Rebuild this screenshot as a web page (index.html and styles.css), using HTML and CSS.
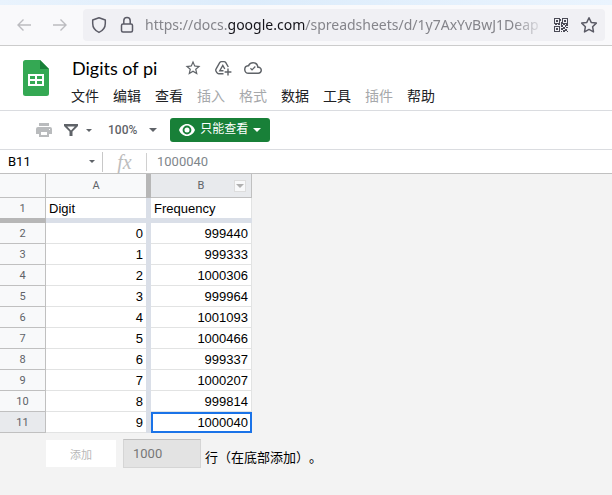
FILE: index.html
```html
<!DOCTYPE html>
<html lang="zh-CN">
<head>
<meta charset="utf-8">
<title>Digits of pi</title>
<link rel="stylesheet" href="styles.css">
</head>
<body>
<div class="tabstrip"></div>
<div class="browserbar">
  <button class="nav" aria-label="后退"><svg width="16" height="16" viewBox="0 0 16 16"><path d="M15 8H2M7.500 2.500L2 8l5.500 5.500"/></svg></button>
  <button class="nav" aria-label="前进"><svg width="16" height="16" viewBox="0 0 16 16"><path d="M1 8h13M8.500 2.500L14 8l-5.500 5.500"/></svg></button>
  <div class="address">
    <svg class="line" width="16" height="18" viewBox="0 0 16 18"><path d="M8 1.700L14.300 4v3.500c0 4.500-2.800 7.300-6.300 8.900-3.500-1.600-6.300-4.400-6.300-8.900V4z"/></svg>
    <svg class="line" width="16" height="18" viewBox="0 0 16 18"><rect x="2.500" y="8" width="11" height="8" rx="1.500"/><path d="M4.800 8V4.800a3.200 3.200 0 0 1 6.400 0V8"/></svg>
    <div class="url">https://docs.<b>google.com</b>/spreadsheets/d/1y7AxYvBwJ1Deap</div>
    <svg class="qr" width="14" height="14" viewBox="0 0 14 14"><path fill-rule="evenodd" d="M0 0h6v6H0zM1 1v4h4V1zM8 0h6v6H8zM9 1v4h4V1zM0 8h6v6H0zM1 9v4h4V9zM2 2h2v2H2zM10 2h2v2h-2zM2 10h2v2H2zM6 1h1v2H6zM7 4h1v3H7zM1 6h2v1H1zM4 6h2v1H4zM9 6h2v1H9zM12 6h2v2h-2zM7 7h2v2H7zM9 9h2v2H9zM11 7h1v2h-1zM12 9h2v1h-2zM7 10h2v2H7zM11 11h2v2h-2zM9 12h2v2H9zM7 13h1v1H7zM13 13h1v1h-1z"/></svg>
    <svg class="line" width="18" height="18" viewBox="0 0 18 18"><path d="M9 1.700l2.200 4.700 5.100.7-3.700 3.600.9 5.200L9 13.400l-4.500 2.500.9-5.200L1.700 7.100l5.100-.7z"/></svg>
  </div>
</div>
<header class="docheader">
  <svg class="logo" width="26" height="36" viewBox="0 0 26 36"><path fill="#34a853" d="M2.500 0H17l9 9v24.500a2.500 2.500 0 0 1-2.500 2.500h-21A2.500 2.500 0 0 1 0 33.500v-31A2.500 2.500 0 0 1 2.500 0z"/><path fill="#188038" d="M17 0l9 9h-9z"/><path fill="#fff" fill-rule="evenodd" d="M5 14h16v12H5zM7 16v3h5v-3zM14 16v3h5v-3zM7 21v3h5v-3zM14 21v3h5v-3z"/></svg>
  <div class="doc">
    <div class="titlerow">
      <h1>Digits of pi</h1>
      <div class="titleicons">
        <svg width="18" height="18" viewBox="0 0 24 24"><path d="M22 9.240l-7.190-.62L12 2 9.190 8.630 2 9.240l5.460 4.730L5.820 21 12 17.270 18.180 21l-1.630-7.030zM12 15.400l-3.760 2.270 1-4.280-3.320-2.880 4.380-.38L12 6.100l1.710 4.040 4.380.38-3.320 2.880 1 4.280z"/></svg>
        <svg width="18" height="18" viewBox="0 0 18 18"><path class="stroke" d="M9.500 14.700H4.700Q3.500 14.700 2.900 13.700L2 12.200Q1.400 11.200 2 10.200L5.700 3.600Q6.300 2.600 7.500 2.600H10Q11.200 2.600 11.800 3.600L14.300 8M9.500 11.700H5.800L8.800 6.500l2 3.500M14 9.600v6.800M10.600 13H17.400"/></svg>
        <svg width="18" height="18" viewBox="0 0 24 24"><path d="M19.350 10.040A7.490 7.490 0 0 0 12 4C9.110 4 6.600 5.640 5.350 8.040A5.994 5.994 0 0 0 0 14c0 3.310 2.690 6 6 6h13c2.760 0 5-2.240 5-5 0-2.640-2.050-4.780-4.650-4.960zM19 18H6a4 4 0 0 1-.4-7.980l1.070-.11.500-.95A5.470 5.470 0 0 1 12 6c2.620 0 4.880 1.860 5.390 4.430l.3 1.500 1.530.11A2.980 2.980 0 0 1 19 18z"/><path d="M10.700 13.200l-1.500-1.500L8 12.900l2.700 2.700 5-5-1.200-1.200z"/></svg>
      </div>
    </div>
    <nav class="menu">
      <button>文件</button><button>编辑</button><button>查看</button><button disabled>插入</button><button disabled>格式</button><button>数据</button><button>工具</button><button disabled>插件</button><button>帮助</button>
    </nav>
  </div>
</header>
<div class="toolbar">
  <button class="print" disabled aria-label="打印"><svg width="16" height="14" viewBox="0 0 16 14"><path fill-rule="evenodd" d="M3 0h10v3H3zM2 4h12a2 2 0 0 1 2 2v5h-3v3H3v-3H0V6a2 2 0 0 1 2-2zM5 9v3h6V9zM13 6v1h1V6z"/></svg></button>
  <button class="filter" aria-label="过滤器"><svg width="14" height="12" viewBox="0 0 14 12"><path fill-rule="evenodd" d="M0 0h14v2L8.500 7.500V12h-3V7.500L0 2zM3.200 2.600L7 6.400l3.800-3.800z"/></svg><i class="caret small"></i></button>
  <button class="zoom">100%<i class="caret"></i></button>
  <button class="viewonly"><svg width="16" height="12" viewBox="0 0 16 12"><path fill-rule="evenodd" d="M8 0c3.600 0 6.700 2.500 8 6-1.300 3.500-4.400 6-8 6S1.300 9.500 0 6c1.300-3.500 4.400-6 8-6zM8 1.600a4.400 4.400 0 1 0 0 8.800 4.400 4.400 0 0 0 0-8.800zM8 3.500a2.500 2.500 0 1 1 0 5 2.500 2.500 0 0 1 0-5z"/></svg><span>只能查看</span><i class="caret"></i></button>
</div>
<div class="formulabar">
  <button class="namebox">B11<i class="caret small"></i></button>
  <span class="fx">fx</span>
  <input class="formula" aria-label="公式" value="1000040" readonly>
</div>
<main class="sheet">
  <table>
    <colgroup><col class="c-head"><col class="c-data"><col class="c-freeze"><col class="c-last"></colgroup>
    <thead>
      <tr><th></th><th>A</th><td class="bar"></td><th class="active last"><div class="colname">B<button class="colmenu" aria-label="列菜单"><i class="caret"></i></button></div></th></tr>
    </thead>
    <tbody>
      <tr class="titles"><th>1</th><td>Digit</td><td class="gap"></td><td>Frequency</td></tr>
      <tr class="freeze"><td class="bar"></td><td class="gap" colspan="3"></td></tr>
      <tr><th>2</th><td>0</td><td class="gap"></td><td>999440</td></tr>
      <tr><th>3</th><td>1</td><td class="gap"></td><td>999333</td></tr>
      <tr><th>4</th><td>2</td><td class="gap"></td><td>1000306</td></tr>
      <tr><th>5</th><td>3</td><td class="gap"></td><td>999964</td></tr>
      <tr><th>6</th><td>4</td><td class="gap"></td><td>1001093</td></tr>
      <tr><th>7</th><td>5</td><td class="gap"></td><td>1000466</td></tr>
      <tr><th>8</th><td>6</td><td class="gap"></td><td>999337</td></tr>
      <tr><th>9</th><td>7</td><td class="gap"></td><td>1000207</td></tr>
      <tr><th>10</th><td>8</td><td class="gap"></td><td>999814</td></tr>
      <tr><th class="active">11</th><td>9</td><td class="gap"></td><td class="selected">1000040</td></tr>
    </tbody>
  </table>
  <div class="addrows">
    <button disabled>添加</button>
    <input id="rows" value="1000" disabled>
    <label for="rows">行（在底部添加）。</label>
  </div>
</main>
</body>
</html>
```
FILE: styles.css
```css
* { box-sizing: border-box; }
body {
  margin: 0;
  min-height: 100vh;
  display: flex;
  flex-direction: column;
  background: #fff;
  color: #000;
  font-family: Roboto, "Noto Sans CJK SC", sans-serif;
}
button, input {
  font: inherit;
  color: inherit;
  border: 0;
  padding: 0;
  background: none;
}
svg { display: block; flex: none; }

.tabstrip { height: 5px; background: linear-gradient(90deg, #e9f3fd, #dcecfb 40%, #eaf4fe); }
.browserbar {
  display: flex;
  align-items: center;
  height: 41px;
  padding: 0 7px 1px 16px;
  background: #f9f9fb;
  border-bottom: 1px solid #ccc;
}
.nav { margin-right: 20px; }
.nav + .nav { margin-right: 15px; }
.nav path { fill: none; stroke: #bcbcc0; stroke-width: 1.4; }
.address {
  flex: 1;
  min-width: 0;
  height: 32px;
  display: flex;
  align-items: center;
  padding: 0 7px 0 8px;
  gap: 12px;
  background: #f0f0f4;
  border-radius: 4px;
}
.line { fill: none; stroke: #5b5b66; stroke-width: 1.5; stroke-linejoin: round; }
.url {
  flex: 1;
  min-width: 0;
  margin-right: -3px;
  margin-left: -2px;
  overflow: hidden;
  white-space: nowrap;
  font: 14px/24px "Noto Sans", sans-serif;
  color: #85858b;
  mask-image: linear-gradient(90deg, #000 calc(100% - 32px), transparent);
}
.url b { font-weight: 400; color: #15141a; }
.qr { fill: #4a4a55; }

.docheader {
  display: flex;
  height: 65px;
  padding: 12px 23px 0;
  border-bottom: 1px solid #dadce0;
}
.logo { margin-top: 2px; }
.doc { margin-left: 22px; }
.titlerow { display: flex; align-items: center; height: 20px; }
h1 { margin: 0 0 0 1px; font: 18px/20px Lato, sans-serif; }
.titleicons { display: flex; gap: 12px; margin-left: 27px; fill: #5f6368; }
.stroke { fill: none; stroke: #5f6368; stroke-width: 1.4; }
.menu { display: flex; gap: 14px; margin-top: 8px; font-size: 14px; line-height: 20px; }
.menu button { white-space: nowrap; color: #202124; }
.menu button:disabled { color: #a6a8ab; }

.caret {
  width: 0;
  height: 0;
  border: 4px solid transparent;
  border-top-color: currentColor;
  border-bottom: 0;
}
.caret.small { border-width: 3px 3px 0; }
.toolbar {
  display: flex;
  align-items: center;
  height: 39px;
  padding: 0 36px;
  border-bottom: 1px solid #dadce0;
  color: #5f6368;
}
.toolbar button { display: flex; align-items: center; }
.print { fill: #b9bbbd; margin-right: 12px; }
.filter { fill: #5f6368; gap: 8px; margin-right: 16px; }
.zoom { gap: 12px; margin-right: 13px; font-size: 12px; font-weight: 500; }
.viewonly {
  height: 24px;
  padding: 0 9px;
  gap: 5px;
  border-radius: 3px;
  background: #188038;
  color: #fff;
  fill: #fff;
  font-size: 12px;
  line-height: 20px;
}
.viewonly span { padding-bottom: 2px; }
.formulabar {
  display: flex;
  align-items: center;
  height: 24px;
  border-bottom: 1px solid #c0c0c0;
}
.namebox {
  display: flex;
  align-items: center;
  justify-content: space-between;
  width: 103px;
  height: 20px;
  padding: 0 7px 0 8px;
  border-right: 1px solid #c8c8c8;
  font-size: 13px;
}
.namebox .caret { color: #5f6368; }
.fx {
  width: 44px;
  border-right: 1px solid #d0d0d0;
  color: #bdbdbd;
  text-align: center;
  font: italic 20px/18px "Liberation Serif", serif;
}
.formula { flex: 1; min-width: 0; padding-left: 10px; font-size: 13px; color: #80868b; }

.sheet { flex: 1; background: #f3f3f3; }
table { table-layout: fixed; width: 252px; border-collapse: separate; border-spacing: 0; }
.c-head { width: 46px; }
.c-data { width: 100px; }
.c-freeze { width: 5px; }
.c-last { width: 101px; }
th, td { padding: 0; }
th {
  background: #f8f9fa;
  border-right: 1px solid #c0c0c0;
  border-bottom: 1px solid #c0c0c0;
  color: #5f6368;
  font-size: 11px;
  font-weight: 400;
}
thead tr { height: 24px; }
thead th + th { border-right: 0; }
thead th.last { border-right: 1px solid #c0c0c0; }
th.active { background: #e8eaed; }
.colname { position: relative; }
.colmenu {
  position: absolute;
  right: 5px;
  top: 1px;
  width: 12px;
  height: 12px;
  display: grid;
  place-items: center;
  background: #f8f9fa;
  border: 1px solid #ddd;
  color: #b0b0b0;
}
tbody tr { height: 21px; }
tbody td {
  padding: 2px 3px 0;
  background: #fff;
  border-bottom: 1px solid #e2e3e3;
  text-align: right;
  font: 13px/18px "Liberation Sans", sans-serif;
}
tbody td:last-child { border-right: 1px solid #e2e3e3; }
tr.titles { height: 20px; }
tr.titles td { text-align: left; border-bottom: 0; }
tr.titles th { border-bottom: 0; }
tr.freeze { height: 5px; }
tr.freeze td { line-height: 0; }
td.bar, tbody td.bar { padding: 0; background: #b7b7b7; border: 0; }
tbody td.gap { padding: 0; background: #dadfe8; border: 0; }
tbody td.selected { background: #fff; border-color: transparent; outline: 2px solid #1a73e8; outline-offset: -2px; }
.addrows { display: flex; align-items: center; gap: 7px; padding: 6px 0 0 46px; font-size: 12px; }
.addrows button { width: 70px; height: 27px; background: #fff; color: #b8b8b8; font-size: 11px; }
.addrows input {
  width: 78px;
  height: 29px;
  padding: 0 9px;
  border: 1px solid #d5d5d5;
  border-top-color: #c0c0c0;
  background: #e3e3e3;
  color: #777;
  font-size: 13px;
}
.addrows label { margin-left: -3px; padding-top: 6px; font-size: 13px; text-spacing-trim: space-all; }
```
